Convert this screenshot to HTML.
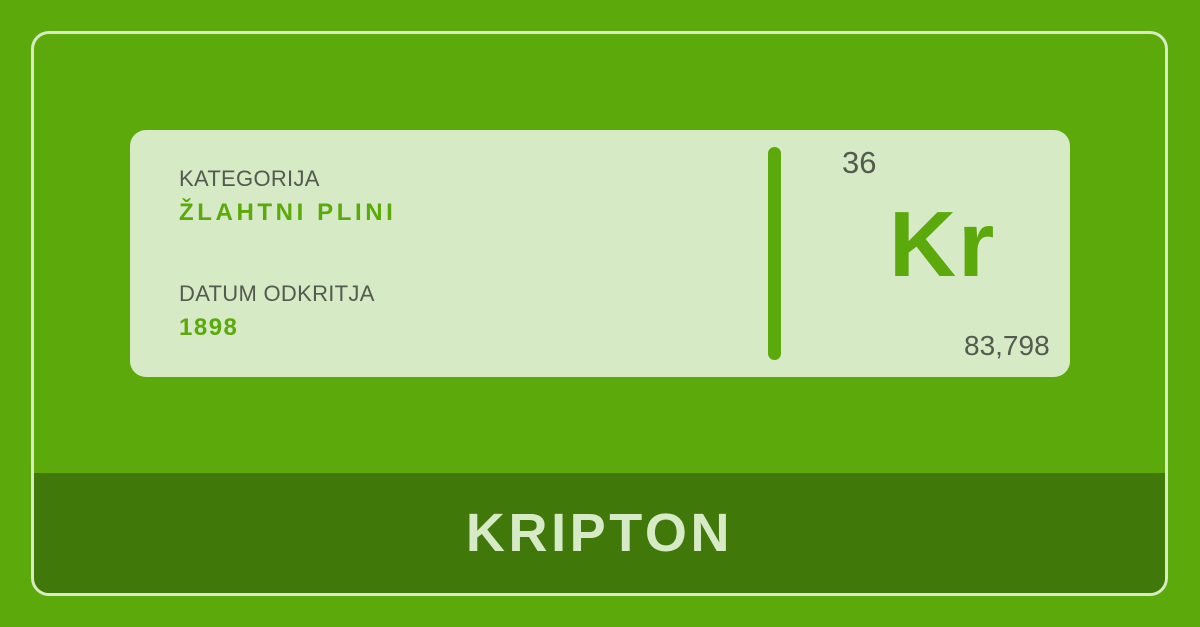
<!DOCTYPE html>
<html><head><style>
body{margin:0;width:1200px;height:627px;background:#5ba90b;position:relative;overflow:hidden;font-family:"Liberation Sans",sans-serif}
.frame{position:absolute;left:31px;top:31px;width:1131px;height:559px;border:3px solid #d6eac6;border-radius:18px;overflow:hidden}
.band{position:absolute;left:0;right:0;bottom:0;height:120px;background:#41780a}
.band div{position:absolute;left:0;right:0;top:30px;text-align:center;color:#d6eac6;font-weight:bold;font-size:54px;letter-spacing:3.6px;line-height:60px}
.card{position:absolute;left:130px;top:130px;width:940px;height:247px;background:#d6eac6;border-radius:16px}
.t{position:absolute;white-space:nowrap}
.lbl{color:#535a4e;font-size:22px;letter-spacing:0.3px}
.val{color:#5ba90b;font-size:24px;font-weight:bold;letter-spacing:3.6px}
.bar{position:absolute;left:638px;top:17px;width:13px;height:213px;background:#5ba90b;border-radius:7px}
</style></head><body>
<div class="frame"><div class="band"><div>KRIPTON</div></div></div>
<div class="card">
<div class="t lbl" style="left:49px;top:36px">KATEGORIJA</div>
<div class="t val" style="left:49px;top:69px">ŽLAHTNI PLINI</div>
<div class="t lbl" style="left:49px;top:151px">DATUM ODKRITJA</div>
<div class="t val" style="left:49px;top:184px;letter-spacing:1.5px">1898</div>
<div class="bar"></div>
<div class="t" style="left:712px;top:15px;font-size:31px;color:#535a4e">36</div>
<div class="t" style="left:759px;top:61px;font-size:93px;font-weight:bold;color:#5ba90b;letter-spacing:2px">Kr</div>
<div class="t" style="left:834px;top:200px;font-size:28px;color:#535a4e">83,798</div>
</div>
</body></html>
